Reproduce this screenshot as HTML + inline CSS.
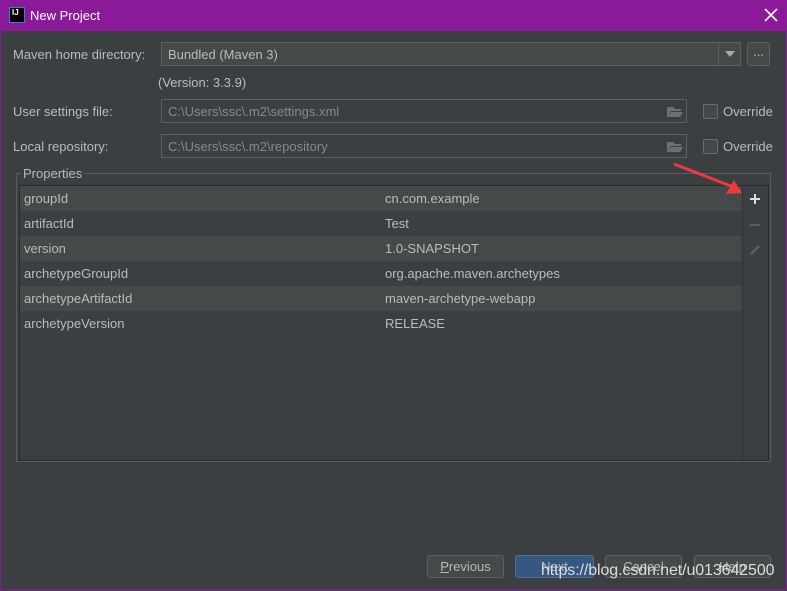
<!DOCTYPE html>
<html><head><style>
body{margin:0;width:787px;height:591px;overflow:hidden;background:#3c3f41;font-family:"Liberation Sans",sans-serif;font-size:13px;color:#bbbbbb;position:relative}
.win{position:absolute;left:0;top:0;width:785px;height:589px;border:1px solid #8a1a98;border-top:none}
.title{position:absolute;left:0;top:0;width:787px;height:31px;background:#8a1a98;color:#fff;font-size:13px}
.abs{position:absolute}
.field{position:absolute;border:1px solid #5e6060;background:#3c3f41;color:#888;box-sizing:border-box;padding:0 6px;line-height:23px}
.row{position:absolute;left:20px;width:722px;height:25px;line-height:25px}
.row span{position:absolute}
.btn{position:absolute;top:555px;height:23px;border:1px solid #5e6060;border-radius:3px;background:#45494a;box-sizing:border-box;text-align:center;line-height:21px;color:#bbb}
.cb{position:absolute;width:13px;height:13px;border:1px solid #6b6b6b;border-radius:2px;background:#43494a}
</style></head><body>
<div class="win"></div>
<div class="title">
<div class="abs" style="left:9px;top:7px;width:16px;height:16px;background:#000;border:1px solid #3a7bd5;box-sizing:border-box;color:#fff;font-size:8px;font-weight:bold;line-height:10px;padding-left:2px">IJ</div>
<div class="abs" style="left:30px;top:8px">New Project</div>
<svg class="abs" style="left:764px;top:8px" width="14" height="14"><path d="M1 1L13 13M13 1L1 13" stroke="#fff" stroke-width="1.6"/></svg>
</div>
<div class="abs" style="left:13px;top:47px">Maven home directory:</div>
<div class="field" style="left:161px;top:42px;width:580px;height:24px;color:#bbb;background:#45494a">Bundled (Maven 3)</div>
<div class="abs" style="left:718px;top:43px;width:1px;height:22px;background:#5e6060"></div>
<div class="abs" style="left:725px;top:51px;width:0;height:0;border-left:5px solid transparent;border-right:5px solid transparent;border-top:6px solid #aaa"></div>
<div class="abs" style="left:747px;top:42px;width:23px;height:24px;border:1px solid #5e6060;border-radius:3px;background:#45494a;box-sizing:border-box;text-align:center;line-height:18px">...</div>
<div class="abs" style="left:158px;top:75px">(Version: 3.3.9)</div>
<div class="abs" style="left:13px;top:104px">User settings file:</div>
<div class="field" style="left:161px;top:99px;width:526px;height:24px">C:\Users\ssc\.m2\settings.xml</div>
<div class="abs" style="left:13px;top:139px">Local repository:</div>
<div class="field" style="left:161px;top:134px;width:526px;height:24px">C:\Users\ssc\.m2\repository</div>
<svg class="abs" style="left:667px;top:105px" width="16" height="12"><path d="M0 2h6l2 2h6v2H4L1 12H0z M4 7h12l-3 5H1z" fill="#6d7070"/></svg>
<svg class="abs" style="left:667px;top:140px" width="16" height="12"><path d="M0 2h6l2 2h6v2H4L1 12H0z M4 7h12l-3 5H1z" fill="#6d7070"/></svg>
<div class="cb" style="left:703px;top:104px"></div><div class="abs" style="left:723px;top:104px">Override</div>
<div class="cb" style="left:703px;top:139px"></div><div class="abs" style="left:723px;top:139px">Override</div>
<div class="abs" style="left:16px;top:173px;width:755px;height:289px;border:1px solid #5a5d5e;box-sizing:border-box"></div>
<div class="abs" style="left:21px;top:166px;background:#3c3f41;padding:0 2px">Properties</div>
<div class="abs" style="left:19px;top:185px;width:750px;height:276px;border:1px solid #2b2b2b;box-sizing:border-box;background:#3c3f41"></div>
<div class="abs" style="left:742px;top:186px;width:1px;height:274px;background:#2f3132"></div>
<div class="row" style="top:186px;background:#45494a"><span style="left:4px">groupId</span><span style="left:365px">cn.com.example</span></div>
<div class="row" style="top:211px"><span style="left:4px">artifactId</span><span style="left:365px">Test</span></div>
<div class="row" style="top:236px;background:#45494a"><span style="left:4px">version</span><span style="left:365px">1.0-SNAPSHOT</span></div>
<div class="row" style="top:261px"><span style="left:4px">archetypeGroupId</span><span style="left:365px">org.apache.maven.archetypes</span></div>
<div class="row" style="top:286px;background:#45494a"><span style="left:4px">archetypeArtifactId</span><span style="left:365px">maven-archetype-webapp</span></div>
<div class="row" style="top:311px"><span style="left:4px">archetypeVersion</span><span style="left:365px">RELEASE</span></div>
<svg class="abs" style="left:748px;top:192px" width="14" height="14"><path d="M7 2v10M2 7h10" stroke="#ddd" stroke-width="2"/></svg>
<svg class="abs" style="left:748px;top:218px" width="14" height="14"><path d="M2 7h10" stroke="#5a5d5e" stroke-width="2"/></svg>
<svg class="abs" style="left:748px;top:243px" width="14" height="14"><path d="M2 12l1-3 7-7 2 2-7 7z" fill="#5a5d5e"/></svg>
<svg class="abs" style="left:670px;top:160px" width="80" height="40"><path d="M4 4L66 28" stroke="#f03a3a" stroke-width="3"/><path d="M72 33L56 34 64 20z" fill="#f03a3a"/></svg>
<div class="btn" style="left:427px;width:77px"><u>P</u>revious</div>
<div class="btn" style="left:515px;width:79px;background:#365880;border-color:#4a6fa0">Next</div>
<div class="btn" style="left:605px;width:77px">Cancel</div>
<div class="btn" style="left:694px;width:77px">Help</div>
<div class="abs" style="left:541px;top:562px;font-size:16px;color:#ddd;letter-spacing:-0.1px">https://blog.csdn.net/u013642500</div>
</body></html>
